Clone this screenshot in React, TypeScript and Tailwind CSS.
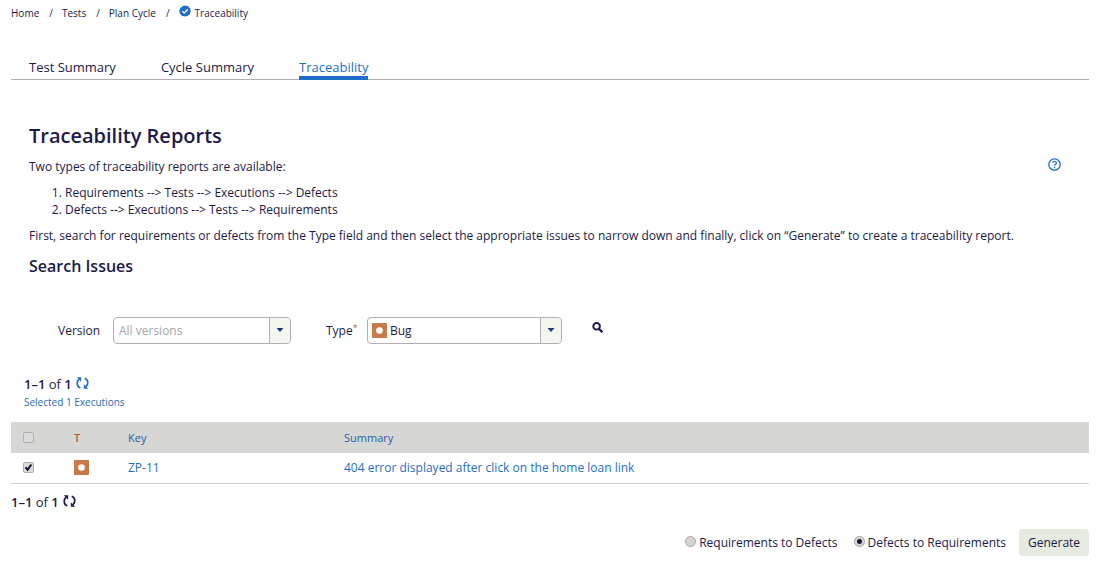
import { useState } from "react";

const crumbs = ["Home", "Tests", "Plan Cycle"];
const tabs = ["Test Summary", "Cycle Summary", "Traceability"];

function VerifiedIcon() {
  return (
    <svg viewBox="0 0 12 12" className="mb-1 size-3" aria-hidden="true">
      <path
        d="M6 .2 7.500 1l1.700-.1.700 1.500 1.500.9-.1 1.700.6 1.100-.7 1.500-.2 1.700-1.600.6-1 1.400-1.700-.2-.9.600-1.200-.6-1.600.1-.9-1.500-1.500-.9.100-1.600L.100 6 .900 4.600 1 2.900l1.600-.7.900-1.300L5 1z"
        fill="#1f6fc9"
      />
      <path d="m3.300 6.100 1.900 1.900 3.600-3.800" fill="none" stroke="#fff" strokeWidth="1.300" />
    </svg>
  );
}

function BugIcon() {
  return (
    <svg viewBox="0 0 15 15" className="block size-[15px]" aria-hidden="true">
      <rect width="15" height="15" rx="0.800" fill="#c97a4a" />
      <circle cx="7.500" cy="7.500" r="3.300" fill="#fff" />
    </svg>
  );
}

function RefreshIcon() {
  return (
    <svg viewBox="0 0 13 12" className="h-3 w-[13px]" fill="none" stroke="currentColor" strokeWidth="1.700" aria-hidden="true">
      <path d="M4.300 10.800C.500 9.300.300 4.500 3.100 2.200" />
      <path d="M.8.300h4.400v4.400z" fill="currentColor" stroke="none" />
      <path d="M8.700 1.200c3.800 1.500 4 6.300 1.200 8.600" />
      <path d="M12.200 11.700H7.800V7.300z" fill="currentColor" stroke="none" />
    </svg>
  );
}

function HelpIcon() {
  return (
    <svg viewBox="0 0 13 13" className="block size-[13px]" fill="none" stroke="#1f6fc9" aria-hidden="true">
      <circle cx="6.500" cy="6.500" r="5.700" strokeWidth="1.300" />
      <path d="M4.700 5.100c0-2.400 3.700-2.300 3.700-.2 0 1.400-1.800 1.300-1.800 2.900" strokeWidth="1.300" />
      <path d="M6.600 8.800v1.400" strokeWidth="1.400" />
    </svg>
  );
}

function SearchIcon() {
  return (
    <svg viewBox="0 0 11 11" className="block size-[11px]" fill="none" stroke="#1c1a4a" aria-hidden="true">
      <circle cx="4.600" cy="4.300" r="3.300" strokeWidth="1.900" />
      <path d="m7 6.900 3.300 3.300" strokeWidth="2.200" />
    </svg>
  );
}

function Arrow() {
  return (
    <span className="pointer-events-none absolute inset-y-0 right-0 flex w-[21px] items-center justify-center rounded-r-sm border-l border-[#b5adb3] bg-[#f3f6ef]">
      <svg viewBox="0 0 8 4" className="mb-0.5 h-1 w-2" aria-hidden="true">
        <path d="M.5 0h7L4 4z" fill="#1b3a7a" />
      </svg>
    </span>
  );
}

function Check({ label, checked, onChange }: { label: string; checked: boolean; onChange: (v: boolean) => void }) {
  return (
    <span className="grid size-[11px] place-items-center">
      <input
        type="checkbox"
        aria-label={label}
        checked={checked}
        onChange={(e) => onChange(e.target.checked)}
        className="col-start-1 row-start-1 size-[11px] appearance-none rounded-xs border border-[#b5adb3] bg-[#dddcdb]"
      />
      {checked && (
        <svg viewBox="0 0 9 9" className="pointer-events-none col-start-1 row-start-1 size-[9px]" aria-hidden="true">
          <path d="m1.500 4.300 2.100 2.400 3.700-5.200" fill="none" stroke="#1c1a3a" strokeWidth="2.100" />
        </svg>
      )}
    </span>
  );
}

function Count({ blue }: { blue?: boolean }) {
  return (
    <div className="flex items-center gap-1 text-[13px] leading-5">
      <span>
        <b className="font-semibold">1–1</b> of <b className="font-semibold">1</b>
      </span>
      <button aria-label="Refresh" className={blue ? "pb-0.5 text-[#1f6fc9]" : "pb-0.5 text-[#1c1a4a]"}>
        <RefreshIcon />
      </button>
    </div>
  );
}

const radioClass =
  "mb-0.5 size-[11px] appearance-none rounded-full border border-[#aaa5a9] bg-[#d5d4d3] checked:bg-[radial-gradient(circle,#1c1a3a_2px,#d5d4d3_3px)]";

export default function App() {
  const [header, setHeader] = useState(false);
  const [row, setRow] = useState(true);
  const [mode, setMode] = useState("dr");

  return (
    <main className="bg-white pr-[9px] pl-[11px] font-['Open_Sans','Noto_Sans',sans-serif] text-[12px] leading-[17px] text-[#1c1a4a]">
      <nav aria-label="Breadcrumb" className="flex items-center pt-[5px] text-[10px] leading-4">
        {crumbs.map((c) => (
          <span key={c} className="flex">
            <a href="#">{c}</a>
            <span className="pr-[9px] pl-2.5">/</span>
          </span>
        ))}
        <a href="#" className="flex items-center gap-1">
          <VerifiedIcon />
          Traceability
        </a>
      </nav>

      <nav aria-label="Reports" className="mt-[37px] flex gap-[45px] border-b border-[#b5adb3] pl-[18px] text-[13px] leading-[18px]">
        {tabs.map((t, i) => (
          <a
            key={t}
            href="#"
            className={i === 2 ? "-mb-px border-b-4 border-[#1f6fc9] text-[#1f6fc9]" : "pb-[3px]"}
          >
            {t}
          </a>
        ))}
      </nav>

      <section className="pl-[18px]">
        <h1 className="mt-[42px] text-[20px] leading-7 font-semibold">Traceability Reports</h1>
        <div className="mt-2 flex items-center justify-between pr-7">
          <p>Two types of traceability reports are available:</p>
          <button aria-label="Help" className="pb-1">
            <HelpIcon />
          </button>
        </div>
        <ol className="mt-[9px] list-decimal pl-9">
          <li>Requirements --&gt; Tests --&gt; Executions --&gt; Defects</li>
          <li>Defects --&gt; Executions --&gt; Tests --&gt; Requirements</li>
        </ol>
        <p className="mt-[9px]">
          First, search for requirements or defects from the Type field and then select the appropriate issues to narrow
          down and finally, click on “Generate” to create a traceability report.
        </p>
        <h2 className="mt-2.5 text-[16px] leading-6 font-semibold">Search Issues</h2>

        <form className="mt-[39px] flex items-center pl-[29px]" onSubmit={(e) => e.preventDefault()}>
          <label htmlFor="version" className="w-[55px]">
            Version
          </label>
          <div className="relative h-[27px] w-[178px] rounded-sm border border-[#b5adb3]">
            <select id="version" className="size-full appearance-none pl-[5px] text-[#a5a5aa]">
              <option>All versions</option>
            </select>
            <Arrow />
          </div>
          <label htmlFor="type" className="ml-[35px] w-[41px]">
            Type<sup className="text-[#c4582a]">*</sup>
          </label>
          <div className="relative h-[27px] w-[195px] rounded-sm border border-[#b5adb3]">
            <select id="type" className="size-full appearance-none pl-[22px]">
              <option>Bug</option>
            </select>
            <span className="pointer-events-none absolute inset-y-0 left-1 flex items-center">
              <BugIcon />
            </span>
            <Arrow />
          </div>
          <button aria-label="Search" className="mb-1.5 ml-[30px]">
            <SearchIcon />
          </button>
        </form>
      </section>

      <div className="mt-[30px] pl-[13px]">
        <Count blue />
        <p className="text-[10px] leading-4 text-[#2a6cb8]">Selected 1 Executions</p>
      </div>

      <table className="mt-3 w-full table-fixed border-collapse text-left">
        <thead>
          <tr className="h-[31px] bg-[#d6d6d4] text-[11px] text-[#1f5fae]">
            <th className="w-[63px] pl-3">
              <Check label="Select all" checked={header} onChange={setHeader} />
            </th>
            <th className="w-[54px] font-semibold text-[#b0603a]">T</th>
            <th className="w-[216px] font-medium">Key</th>
            <th className="font-medium">Summary</th>
          </tr>
        </thead>
        <tbody>
          <tr className="h-[30px] border-b border-[#d0d0d0] text-[#1f6fc9]">
            <td className="pl-3">
              <Check label="Select ZP-11" checked={row} onChange={setRow} />
            </td>
            <td>
              <BugIcon />
            </td>
            <td>
              <a href="#">ZP-11</a>
            </td>
            <td>
              <a href="#">404 error displayed after click on the home loan link</a>
            </td>
          </tr>
        </tbody>
      </table>

      <div className="mt-2">
        <Count />
      </div>

      <form className="mt-[17px] flex items-center justify-end" onSubmit={(e) => e.preventDefault()}>
        <label className="mr-4 flex items-center gap-[3px]">
          <input type="radio" name="mode" className={radioClass} checked={mode === "rd"} onChange={() => setMode("rd")} />
          Requirements to Defects
        </label>
        <label className="mr-[13px] flex items-center gap-[3px]">
          <input type="radio" name="mode" className={radioClass} checked={mode === "dr"} onChange={() => setMode("dr")} />
          Defects to Requirements
        </label>
        <button className="h-[27px] w-[70px] rounded-sm bg-[#e5ebe1]">Generate</button>
      </form>
    </main>
  );
}
